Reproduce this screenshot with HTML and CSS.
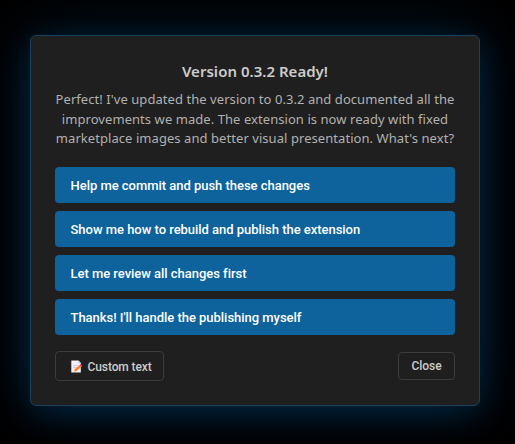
FILE: index.html
```html
<!DOCTYPE html>
<html lang="en">
<head>
<meta charset="utf-8">
<title>Version 0.3.2 Ready!</title>
<link rel="stylesheet" href="styles.css">
</head>
<body>
<main class="dialog">
  <h1 class="title">Version 0.3.2 Ready!</h1>
  <p class="message">Perfect! I've updated the version to 0.3.2 and documented all the<br>improvements we made. The extension is now ready with fixed<br>marketplace images and better visual presentation. What's next?</p>
  <div class="options">
    <button class="option">Help me commit and push these changes</button>
    <button class="option">Show me how to rebuild and publish the extension</button>
    <button class="option">Let me review all changes first</button>
    <button class="option">Thanks! I'll handle the publishing myself</button>
  </div>
  <footer class="actions">
    <button class="secondary custom">
      <svg class="memo" viewBox="0 0 12 13" aria-hidden="true">
        <path fill="#f3eef8" d="M.3.5h7.2l2.3 2.4v9.6H.3z"/>
        <path fill="#c9bfd4" d="M7.5.5v2.4h2.3zM2 5h5v.7H2zM2 7h3.500v.7H2z"/>
        <path fill="#ff822d" d="M3.700 9.200l4.800-4.100 1.700 1.900-4.700 4-2.300.7z"/>
        <path fill="#f92f60" d="M8.500 5.100l.8-.7q.6-.4 1.200.2l.5.6q.5.700-.1 1.200l-.7.6z"/>
      </svg>
      <span>Custom text</span>
    </button>
    <button class="secondary close">Close</button>
  </footer>
</main>
</body>
</html>
```
FILE: styles.css
```css
* { box-sizing: border-box; }
body {
  margin: 0;
  height: 444px;
  padding: 35px 35px 0 30px;
  overflow: hidden;
  background: #000;
  font-family: "Noto Sans", "Open Sans", sans-serif;
}
.dialog {
  width: 450px;
  height: 371px;
  padding: 24px;
  border: 1px solid #15415c;
  border-radius: 6px;
  background: #1f1f1f;
  box-shadow: 0 8px 32px rgba(0, 122, 204, 0.2), 0 0 60px rgba(0, 122, 204, 0.23);
}
.title {
  margin: 0 0 6px;
  font-size: 15px;
  font-weight: 600;
  line-height: 23px;
  letter-spacing: 0.02px;
  text-align: center;
  color: #ccc;
}
.message {
  margin: 0 0 18px;
  padding-top: 1px;
  height: 60px;
  font-size: 13px;
  line-height: 19.5px;
  letter-spacing: 0.06px;
  text-align: center;
  white-space: nowrap;
  color: #b1b1b1;
}
.options {
  display: flex;
  flex-direction: column;
  gap: 8px;
}
button {
  margin: 0;
  font-family: "Roboto", "Liberation Sans", sans-serif;
  font-weight: 500;
  letter-spacing: -0.03px;
  white-space: nowrap;
}
.option {
  height: 36px;
  padding: 0 15px 0 15.5px;
  border: 0;
  border-radius: 4px;
  background: #0e639c;
  color: #fff;
  font-size: 13px;
  text-align: left;
}
.actions {
  display: flex;
  align-items: center;
  justify-content: space-between;
  margin-top: 16px;
}
.secondary {
  display: flex;
  align-items: center;
  justify-content: center;
  padding: 0;
  border: 1px solid #3c3c3c;
  border-radius: 4px;
  background: transparent;
  color: #ccc;
  font-size: 12px;
}
.custom {
  width: 109px;
  height: 30px;
  justify-content: flex-start;
  padding: 1px 0 0 15px;
  letter-spacing: -0.1px;
}
.close {
  width: 57px;
  height: 28px;
}
.memo {
  width: 12px;
  height: 13px;
  margin-right: 4.5px;
}
```
